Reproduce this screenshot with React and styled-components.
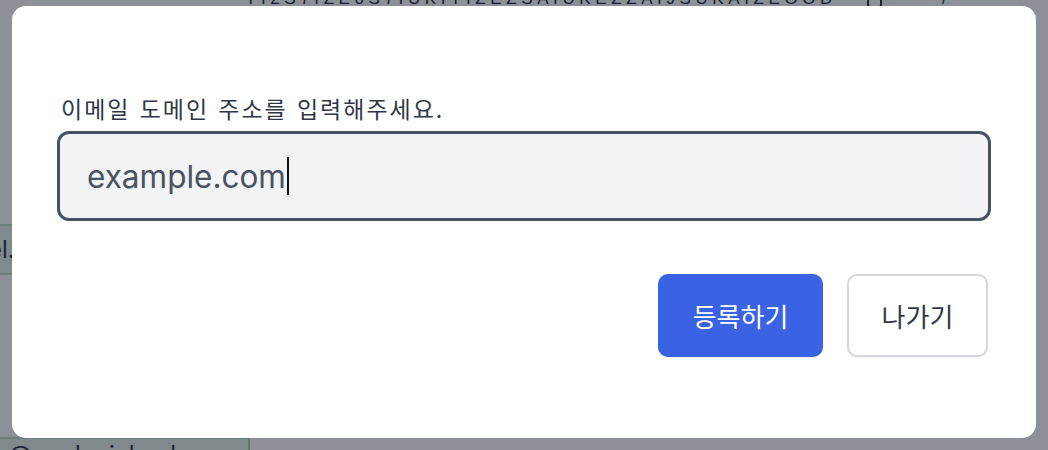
import React from "react";
import styled, { createGlobalStyle } from "styled-components";

const Global = createGlobalStyle`
  html, body { margin: 0; padding: 0; background: #ffffff; }
  body { font-family: Inter, "Noto Sans CJK KR", sans-serif; overflow: hidden; }
  * { box-sizing: border-box; }
`;

const Page = styled.div`
  width: 1048px;
  height: 450px;
  display: flex;
  flex-direction: column;
  background: #ffffff;
  overflow: hidden;
`;

const TokenRow = styled.div`
  flex-shrink: 0;
  display: flex;
  align-items: center;
  margin-top: -10px;
  padding-left: 245px;
  height: 18px;
  font-family: "Liberation Sans", sans-serif;
  font-size: 17px;
  letter-spacing: 4.6px;
  color: #111827;
`;

const SmallIcon = styled.span`
  display: inline-block;
  width: 15px;
  height: 18px;
  margin-left: 30px;
  border: 2px solid #1f2937;
  border-radius: 3px;
`;

const Slash = styled.span`
  margin-left: 60px;
`;

const EmailCell = styled.div`
  flex-shrink: 0;
  display: flex;
  align-items: ${(p) => (p.$top ? "flex-start" : "center")};
  width: ${(p) => p.$w}px;
  height: ${(p) => p.$h}px;
  margin-top: ${(p) => p.$mt}px;
  text-indent: ${(p) => p.$indent}px;
  padding-top: ${(p) => (p.$top ? 1 : 0)}px;
  background: #def3e4;
  border-top: 2px solid #b7e0c1;
  border-bottom: 2px solid #b7e0c1;
  border-right: 2px solid #9ccfa9;
  font-size: 24px;
  color: #1f2937;
  white-space: nowrap;
  overflow: hidden;
`;

const Overlay = styled.div`
  position: fixed;
  inset: 0;
  background: rgba(30, 34, 50, 0.5);
  display: flex;
  justify-content: center;
  align-items: flex-start;
  padding-top: 6px;
`;

const Modal = styled.div`
  width: 1024px;
  height: 432px;
  background: #ffffff;
  border-radius: 14px;
  padding: 86px 45px 0 45px;
  display: flex;
  flex-direction: column;
`;

const Label = styled.label`
  padding-left: 4px;
  font-family: "Noto Sans CJK KR", Inter, sans-serif;
  font-size: 23px;
  line-height: 32px;
  letter-spacing: 2px;
  word-spacing: 2px;
  color: #303744;
  margin-bottom: 7px;
`;

const InputBox = styled.div`
  height: 90px;
  border: 3px solid #475263;
  border-radius: 12px;
  background: #f2f3f5;
  display: flex;
  align-items: center;
  padding-left: 27px;
  font-family: Inter, sans-serif;
  font-size: 31.5px;
  color: #4b5261;
`;

const Caret = styled.span`
  display: inline-block;
  width: 2px;
  height: 38px;
  background: #111111;
  margin-left: 1px;
`;

const Actions = styled.div`
  display: flex;
  justify-content: flex-end;
  gap: 24px;
  margin-top: 53px;
  padding-right: 3px;
`;

const Button = styled.button`
  width: ${(p) => p.$w}px;
  height: 83px;
  border-radius: 10px;
  font-family: "Noto Sans CJK KR", Inter, sans-serif;
  font-size: 26px;
  cursor: pointer;
  display: flex;
  align-items: center;
  justify-content: center;
  background: ${(p) => (p.$primary ? "#3a63e4" : "#ffffff")};
  color: ${(p) => (p.$primary ? "#ffffff" : "#323946")};
  border: ${(p) => (p.$primary ? "none" : "2px solid #d5d8dd")};
  box-shadow: 0 1px 2px rgba(0, 0, 0, 0.06);
`;

export default function App() {
  return (
    <>
      <Global />
      <Page>
        <TokenRow>
          <span>YI2S7IZE0S7IUKIYIZEZSAIUKEZZAIJSUKAIZEOOD</span>
          <SmallIcon />
          <Slash>/</Slash>
        </TokenRow>
        <EmailCell $w={60} $h={51} $mt={216} $indent={-12}>
          el.
        </EmailCell>
        <EmailCell $w={250} $h={60} $mt={162} $indent={-6} $top>
          g@workmichael.com
        </EmailCell>
      </Page>
      <Overlay>
        <Modal>
          <Label>이메일 도메인 주소를 입력해주세요.</Label>
          <InputBox>
            example.com
            <Caret />
          </InputBox>
          <Actions>
            <Button $primary $w={165}>
              등록하기
            </Button>
            <Button $w={141}>나가기</Button>
          </Actions>
        </Modal>
      </Overlay>
    </>
  );
}
